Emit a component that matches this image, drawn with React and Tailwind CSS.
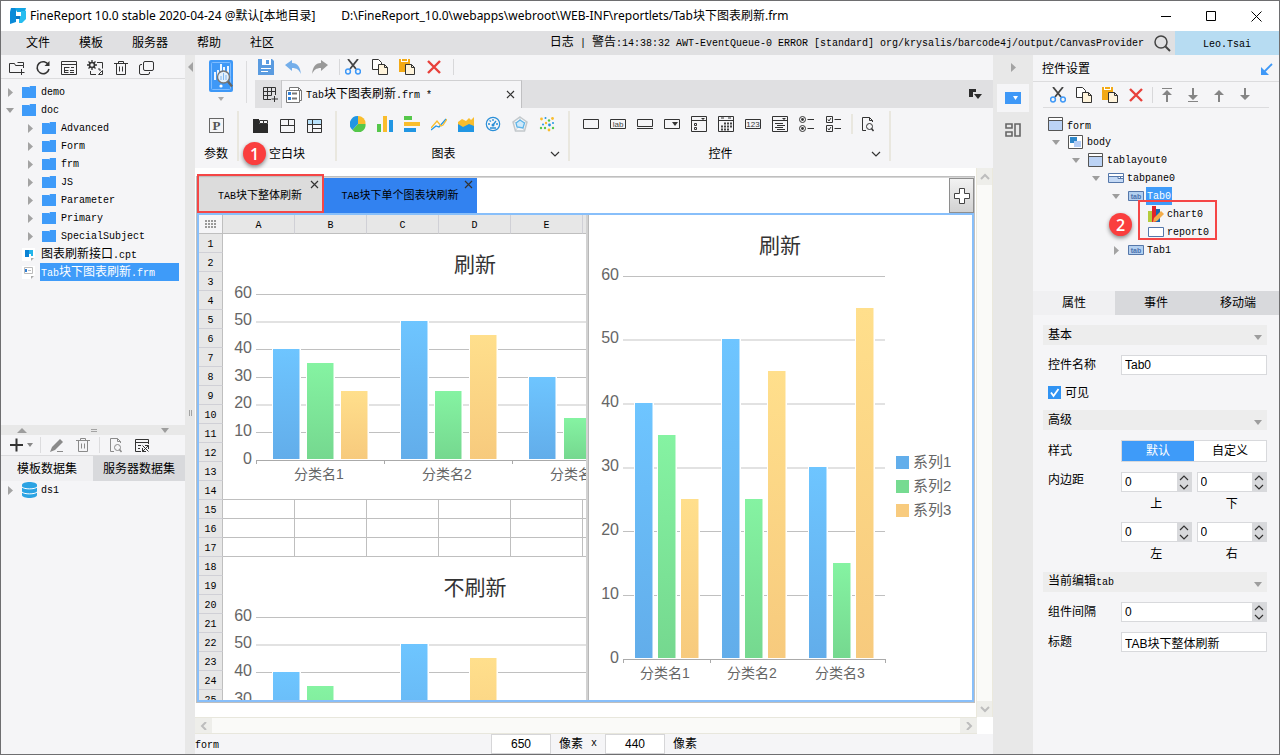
import React, { useState } from 'react';
import clsx from 'clsx';

/* ---------- text ---------- */

// Latin runs are set in 10px mono, Chinese runs in 12px
function Txt({ children, small }) {
  return (
    <span className="font-['Liberation_Mono','Noto_Sans_CJK_SC',monospace] text-[10px] whitespace-pre">
      {children.split(/([\u4e00-\u9fff]+)/).map((run, i) =>
        i % 2 ? <span key={i} className={small ? 'text-[11px]' : 'text-xs'}>{run}</span> : run
      )}
    </span>
  );
}

/* ---------- icons ---------- */

function Icon({ w = 16, h = 16, children, className }) {
  return (
    <svg
      width={w}
      height={h}
      viewBox={`0 0 ${w} ${h}`}
      fill="none"
      stroke="#333"
      className={clsx('shrink-0', className)}
      aria-hidden="true"
    >
      {children}
    </svg>
  );
}

const LogoIcon = () => (
  <Icon w={17}>
    <path d="M2 0h5v14l-6 2V4z" fill="#0a8ad8" stroke="none" />
    <path d="M6 0h11l-1 4H8z" fill="#12a5e4" stroke="none" />
    <path d="M12 3h5v8l-4 4h-3V8h2z" fill="#27bdf0" stroke="none" />
    <path d="M7 4h5v4H9v5l-2 1z" fill="#fff" stroke="none" />
    <path d="M7 8h4v3H7z" fill="#0a79c8" stroke="none" />
  </Icon>
);

const FolderPlusIcon = () => (
  <Icon>
    <path d="M10 12.500H.5V3.500h5l1 2h8V8M8.500 2.500h6v3M12.500 9v6M9.500 12.500h6" />
  </Icon>
);
const RefreshIcon = () => (
  <Icon>
    <path d="M13.500 5A6 6 0 1 0 14 9" strokeWidth="1.600" />
    <path d="M14.500 1v5H9.500z" fill="#333" stroke="none" />
  </Icon>
);
const ListWindowIcon = () => (
  <Icon>
    <path d="M.5 1.500h15v13H.5zM.5 4.500h15M3.500 7v6M3.500 7.500h5M3.500 10.500h4M3.500 12.500h4M10 7.500h3M9 10.500h4M9 12.500h4" />
  </Icon>
);
const GearWindowIcon = () => (
  <Icon>
    <circle cx="5" cy="5" r="2.500" strokeWidth="1.600" />
    <path d="M5 0v2M5 8v2M0 5h2M8 5h2M1.500 1.500l1.500 1.500M7 7l1.500 1.500M8.500 1.500L7 3M3 7L1.500 8.500" strokeWidth="1.300" />
    <path d="M10 2.500h5.500v6M3.500 11v3.500H9M15.500 10.500v4h-4zM11 9h2v2" />
  </Icon>
);
const TrashIcon = ({ color = '#333' }) => (
  <Icon>
    <path d="M1 3.500h14M5.500 3V1.500h5V3M3.500 4v10.500h9V4M6.500 6.500v5M9.500 6.500v5" stroke={color} />
  </Icon>
);
const StackIcon = () => (
  <Icon>
    <rect x="4.500" y="1.500" width="10" height="9" rx="1.500" />
    <path d="M3 4.500H2A1.500 1.500 0 0 0 .5 6v7A1.500 1.500 0 0 0 2 14.500h7a1.500 1.500 0 0 0 1.500-1.500v-1" />
  </Icon>
);
const SaveIcon = () => (
  <Icon>
    <path d="M0 0h14l2 2v14H0z" fill="#5a9be0" stroke="none" />
    <path d="M4 0h9v6H4z" fill="#fff" stroke="none" />
    <path d="M8 1h3v4H8z" fill="#5a9be0" stroke="none" />
    <path d="M3 9.500h10M3 12.500h7" stroke="#fff" />
  </Icon>
);
const UndoIcon = () => (
  <Icon>
    <path d="M0 6l7-5v3c6 0 8 4 9 11-2-4-4-6-9-6v3z" fill="#74aeea" stroke="none" />
  </Icon>
);
const RedoIcon = () => (
  <Icon>
    <path d="M16 6L9 1v3C3 4 1 8 0 15c2-4 4-6 9-6v3z" fill="#999" stroke="none" />
  </Icon>
);
const CutIcon = () => (
  <Icon>
    <path d="M3 0l8 10M13 0L5 10" stroke="#444" strokeWidth="1.800" />
    <circle cx="3" cy="12.500" r="2.400" stroke="#3e98f7" strokeWidth="1.500" />
    <circle cx="13" cy="12.500" r="2.400" stroke="#3e98f7" strokeWidth="1.500" />
  </Icon>
);
const CopyIcon = () => (
  <Icon>
    <path d="M.5.500h6l3 3v7h-9z" fill="#fff" />
    <path d="M6.500 5.500h6l3 3v7h-9z" fill="#fff4dc" />
    <path d="M12.500 5.500v3h3" />
  </Icon>
);
const PasteIcon = () => (
  <Icon>
    <path d="M0 0h11v13H0z" fill="#f3aa16" stroke="none" />
    <path d="M2 0h7v3H2z" fill="#fff" stroke="none" />
    <path d="M3 0h5v2H3z" fill="#f3aa16" stroke="none" />
    <path d="M6.500 5.500h6l3 3v7h-9z" fill="#fff4dc" />
    <path d="M12.500 5.500v3h3" />
  </Icon>
);
const DeleteIcon = () => (
  <Icon>
    <path d="M2 2l12 12M14 2L2 14" stroke="#e8403a" strokeWidth="2.400" />
  </Icon>
);
const ArrowIcon = ({ down, bar }) => (
  <Icon>
    {down ? (
      <path d="M7 1h2v7h4l-5 5-5-5h4z" fill="#858585" stroke="none" />
    ) : (
      <path d="M7 15h2V8h4L8 3 3 8h4z" fill="#858585" stroke="none" />
    )}
    {bar && <path d={down ? 'M3 14.500h10' : 'M3 1.500h10'} stroke="#858585" />}
  </Icon>
);
const PreviewIcon = () => (
  <Icon w={26} h={34}>
    <rect x="1" y="1" width="24" height="32" rx="2" fill="#3e98f7" stroke="none" />
    <rect x="3.500" y="3.500" width="19" height="27" rx="1" stroke="#7fbcff" />
    <path d="M7 21v-8M10 19v-8M13 12V5M16 12V8M20 14V7" stroke="#fff" strokeWidth="1.800" />
    <circle cx="15.500" cy="18" r="6" fill="#e4f0fb" stroke="#777" strokeWidth="1.400" />
    <path d="M13 21v-4M15.500 21v-7M18 21v-5" stroke="#7fb6ef" />
    <path d="M20 22.500l4 5" stroke="#666" strokeWidth="2.400" />
    <circle cx="13" cy="27" r="1.600" fill="#fff" stroke="none" />
  </Icon>
);
const GridPlusIcon = () => (
  <Icon>
    <path d="M9 13.500H1.500v-12h12V9M1.500 5.500h12M1.500 9.500h8M5.500 1.500v12M9.500 1.500v8M12.500 10v6M9.500 13H16" />
  </Icon>
);
const FormFileIcon = () => (
  <Icon>
    <path d="M3.500 3V.500h9l3 3v10H14" fill="#fff" stroke="#777" />
    <path d="M12.500.500v3h3" stroke="#777" />
    <path d="M.5 3.500h13v12H.5z" fill="#fff" stroke="#777" />
    <path d="M2 5h3v3H2zM2 10h3v3H2z" fill="#2f7fd6" stroke="none" />
    <path d="M6 6.500h5M6 11.500h5" stroke="#777" strokeWidth="2" />
  </Icon>
);
const CloseIcon = ({ className }) => (
  <Icon w={9} h={9} className={className}>
    <path d="M1 1l7 7M8 1L1 8" strokeWidth="1.200" />
  </Icon>
);

const ParamIcon = () => (
  <Icon w={15} h={15}>
    <rect x=".5" y=".5" width="14" height="14" stroke="#666" />
    <text x="7.500" y="12" fontSize="13" fontWeight="bold" textAnchor="middle" fill="#555" stroke="none" fontFamily="Liberation Serif">P</text>
  </Icon>
);
const TabBlockIcon = () => (
  <Icon w={15} h={15}>
    <path d="M0 1h6v5h9v9H0z" fill="#2b2b2b" stroke="none" />
    <path d="M6.500 2.500h4v3h-4zM10.500 2.500h4v3h-4z" />
  </Icon>
);
const SplitBlockIcon = () => (
  <Icon w={15} h={15}>
    <path d="M.5 1.500h14v13H.5zM.5 7.500h14M8.500 1.500v6" />
  </Icon>
);
const ReportBlockIcon = () => (
  <Icon w={15} h={15}>
    <path d="M1 2h13v4H1z" fill="#b9e2fb" stroke="none" />
    <path d="M.5 1.500h14v13H.5zM.5 6.500h14M5.500 1.500v13M5.500 10.500h9" />
  </Icon>
);

const PieIcon = () => (
  <Icon>
    <path d="M8 8V0a8 8 0 0 0-5.500 14z" fill="#2196e3" stroke="none" />
    <path d="M8 8V0a7.500 7.500 0 0 1 7.500 8z" fill="#f9bd2d" stroke="none" />
    <path d="M8 8h7.500A7.500 7.500 0 0 1 2.500 14z" fill="#55c74a" stroke="none" />
  </Icon>
);
const ColumnIcon = () => (
  <Icon>
    <path d="M0 8h4v8H0z" fill="#55c74a" stroke="none" />
    <path d="M6 0h4v16H6z" fill="#f9bd2d" stroke="none" />
    <path d="M12 4h4v12h-4z" fill="#2196e3" stroke="none" />
  </Icon>
);
const BarIcon = () => (
  <Icon>
    <path d="M0 0h8v4H0z" fill="#55c74a" stroke="none" />
    <path d="M0 6h16v4H0z" fill="#f9bd2d" stroke="none" />
    <path d="M0 12h12v4H0z" fill="#2196e3" stroke="none" />
  </Icon>
);
const LineIcon = () => (
  <Icon>
    <path d="M0 14l5-4 3 1 7-8" stroke="#2196e3" strokeWidth="1.300" />
    <path d="M0 12l6-7 4 5 2-1 4-6" stroke="#f9bd2d" strokeWidth="1.300" />
  </Icon>
);
const AreaIcon = () => (
  <Icon>
    <path d="M0 6l4-3 4 2 3-3 2 2 3-3v10H0z" fill="#f9bd2d" stroke="none" />
    <path d="M0 8l5 3 6-3 5 2v6H0z" fill="#2196e3" stroke="none" />
  </Icon>
);
const GaugeIcon = () => (
  <Icon>
    <circle cx="8" cy="8" r="6.700" stroke="#2a8fd8" strokeWidth="1.200" />
    <path d="M3 8h2M8 3v2M11 8h2M4.500 4.500l1.500 1M8 9l3-4M5 12h6" stroke="#2a8fd8" strokeWidth="1.300" />
    <circle cx="8" cy="9" r="1.500" fill="#2a8fd8" stroke="none" />
  </Icon>
);
const RadarIcon = () => (
  <Icon>
    <path d="M8 1l7 5-2.500 9h-9L1 6z" stroke="#c2c8cc" strokeWidth="1.500" />
    <path d="M8 8V1M8 8l6-2M8 8l4 6M8 8l-4 6M8 8L2 6" stroke="#c2c8cc" strokeWidth=".7" />
    <path d="M8 4l4.500 3-1.500 5-6-1-1-4z" fill="#cfe9fa" stroke="#5db4e8" strokeWidth="1.300" />
  </Icon>
);
const ScatterIcon = () => (
  <Icon>
    <g stroke="none">
      <g fill="#f9bd2d">
        <circle cx="2.500" cy="3" r="1.400" />
        <circle cx="13.500" cy="2.500" r="1.400" />
        <circle cx="7" cy="7" r="1.200" />
        <circle cx="10" cy="14" r="1.400" />
      </g>
      <g fill="#2196e3">
        <circle cx="6.500" cy="2" r="1" />
        <circle cx="10.500" cy="9" r="1.400" />
        <circle cx="14" cy="7" r="1" />
        <circle cx="4" cy="8.500" r="1" />
      </g>
      <g fill="#55c74a">
        <circle cx="2" cy="12" r="1.200" />
        <circle cx="10" cy="4.500" r="1.200" />
        <circle cx="6" cy="12" r="1.200" />
        <circle cx="14" cy="12" r="1.200" />
      </g>
    </g>
  </Icon>
);

const TextFieldIcon = () => (
  <Icon>
    <path d="M.5 3.500h15v9H.5z" />
  </Icon>
);
const LabelIcon = () => (
  <Icon>
    <path d="M.5 3.500h15v9H.5z" />
    <text x="8" y="11" fontSize="8" textAnchor="middle" fill="#444" stroke="none" fontFamily="Liberation Sans">lab</text>
  </Icon>
);
const ButtonIcon = () => (
  <Icon>
    <path d="M.5 3.500h15v7H.5zM0 12.500h16" />
  </Icon>
);
const ComboIcon = () => (
  <Icon>
    <path d="M.5 3.500h15v9H.5z" />
    <path d="M8 6h6l-3 4z" fill="#333" stroke="none" />
  </Icon>
);
const ComboCheckIcon = () => (
  <Icon>
    <path d="M.5.500h15v15H.5zM.5 4.500h15M3.500 7.500h2v2h-2zM3.500 11.500h2v2h-2z" />
    <path d="M10 2h4l-2 2z" fill="#333" stroke="none" />
  </Icon>
);
const DateIcon = () => (
  <Icon>
    <path d="M.5.500h15v15H.5zM.5 4.500h15M3 2h3M10 2h3" />
    <path d="M6 7.500h8M3 10.500h11M3 13.500h8" strokeDasharray="2 1" strokeWidth="2" stroke="#444" />
  </Icon>
);
const NumberIcon = () => (
  <Icon>
    <path d="M.5 3.500h15v9H.5z" />
    <text x="8" y="11" fontSize="8" textAnchor="middle" fill="#333" stroke="none" fontFamily="Liberation Sans">123</text>
  </Icon>
);
const TreeComboIcon = () => (
  <Icon>
    <path d="M.5.500h15v15H.5zM.5 4.500h15M3 7.500h8M5 9.500h8M3 11.500h8M5 13.500h8" />
    <path d="M10 2h4l-2 2z" fill="#333" stroke="none" />
  </Icon>
);
const RadioGroupIcon = () => (
  <Icon>
    <circle cx="3.500" cy="3.500" r="3" />
    <circle cx="3.500" cy="12.500" r="3" />
    <circle cx="3.500" cy="3.500" r="1.400" fill="#333" stroke="none" />
    <circle cx="3.500" cy="12.500" r="1.400" fill="#333" stroke="none" />
    <path d="M8.500 3.500H15M8.500 12.500H15" />
  </Icon>
);
const CheckGroupIcon = () => (
  <Icon>
    <path d="M.5.500h6v6h-6zM.5 9.500h6v6h-6zM2 3.500L3 5l2-3M2 12.500L3 14l2-3M8.500 3.500H15M8.500 12.500H15" />
  </Icon>
);
const FileSearchIcon = ({ color = '#333' }) => (
  <Icon>
    <g stroke={color}>
      <path d="M6 14.500H2.500v-13h7l3 3V6M9.500 1.500v3h3" />
      <circle cx="9.500" cy="10.500" r="3" />
      <path d="M11.500 12.500l2 2.500" strokeWidth="1.500" />
    </g>
  </Icon>
);
const EditIcon = () => (
  <Icon>
    <path d="M1 15l2-5 8-8 3 3-8 8z" fill="#8a8a8a" stroke="none" />
    <path d="M8 14.500h6" stroke="#8a8a8a" />
  </Icon>
);
const CacheIcon = () => (
  <Icon>
    <path d="M7 14.500H1.500v-12h13V7M1.500 5.500h13M4 8.500h3M4 11.500h2" />
    <path d="M8.500 8.500l6 6M14.500 8.500l-6 6M8.500 11v3.500H12M11 8.500h3.500V12" />
  </Icon>
);

const FolderIcon = () => (
  <Icon w={15} h={14}>
    <path d="M0 2h7v1l1-2h6v12H0z" fill="#3e9bf9" stroke="none" />
  </Icon>
);
const CptIcon = () => (
  <Icon w={13} h={13}>
    <path d="M0 0h13v9l-4 4H0z" fill="#fff" stroke="none" />
    <path d="M3 2h4v7H3z" fill="#0b82d4" stroke="none" />
    <path d="M7 2h4v6H9V6H7z" fill="#23b5ea" stroke="none" />
    <path d="M9 10h3l-3 3z" fill="#aaa" stroke="none" />
  </Icon>
);
const FrmIcon = () => (
  <Icon w={13} h={13}>
    <path d="M0 0h13v9l-4 4H0z" fill="#fff" stroke="none" />
    <path d="M2.500 1.500h8v6h-8zM6 4.500h3" stroke="#bbb" />
    <path d="M3 3h2v3H3z" fill="#2f7fd6" stroke="none" />
    <path d="M9 10h3l-3 3z" fill="#aaa" stroke="none" />
  </Icon>
);
const DbIcon = () => (
  <Icon w={15} h={16}>
    <path d="M0 3c0-4 15-4 15 0v10c0 4-15 4-15 0z" fill="#2ba3e3" stroke="none" />
    <path d="M0 5c2 2.500 13 2.500 15 0M0 10c2 2.500 13 2.500 15 0" stroke="#fff" />
  </Icon>
);
const FormIcon = () => (
  <Icon w={15} h={14}>
    <path d="M.5.500h14v13H.5z" fill="#bcd3f5" stroke="#555" />
    <path d="M1 1h13v2H1z" fill="#fff" stroke="none" />
    <path d="M.5 3.500h14" stroke="#555" />
  </Icon>
);
const BodyIcon = () => (
  <Icon w={15} h={14}>
    <path d="M.5.500h14v13H.5z" fill="#fff" stroke="#555" />
    <path d="M2 2h7v6H2z" fill="#2d86c9" stroke="none" />
    <path d="M6 6h7v6H6z" fill="#b4cdf5" stroke="none" />
  </Icon>
);
const TabPaneIcon = () => (
  <Icon h={11}>
    <path d="M.5.500h15v9H.5z" fill="#fff" stroke="#5577aa" />
    <path d="M1 4h9v2h5v3H1z" fill="#c4d9f5" stroke="none" />
    <path d="M1 3.500h9v2h5M10 3.500h5M12.500 3.500v2" stroke="#5577aa" />
  </Icon>
);
const TabIcon = () => (
  <Icon h={10}>
    <path d="M.5.500h15v9H.5z" fill="#b3d0f0" stroke="#5577aa" />
    <text x="8" y="8" fontSize="7" fontWeight="bold" textAnchor="middle" fill="#4a70ad" stroke="none" fontFamily="Liberation Sans">tab</text>
  </Icon>
);
const ChartIcon = () => (
  <Icon>
    <path d="M0 5h4v11H0z" fill="#b5cc3c" stroke="none" />
    <path d="M4 0h4v16H4z" fill="#e0262b" stroke="none" />
    <path d="M8 3h4v13H8z" fill="#1667b3" stroke="none" />
    <path d="M5 16l1-4 7-7 3 3-7 7z" fill="#f3ad4a" stroke="none" />
  </Icon>
);
const ReportIcon = () => (
  <Icon h={10}>
    <path d="M.5.500h15v9H.5z" fill="#fff" stroke="#5577aa" />
  </Icon>
);

const TriDown = ({ className }) => (
  <Icon w={8} h={5} className={className}>
    <path d="M0 0h8L4 5z" fill="#9d9d9d" stroke="none" />
  </Icon>
);
const TriUp = () => (
  <Icon w={10} h={5}>
    <path d="M0 5h10L5 0z" fill="#9d9d9d" stroke="none" />
  </Icon>
);
const TriRight = () => (
  <Icon w={5} h={9}>
    <path d="M0 0v9l5-4.500z" fill="#a3a3a3" stroke="none" />
  </Icon>
);
const TriLeft = () => (
  <Icon w={5} h={10}>
    <path d="M5 0v10L0 5z" fill="#a3a3a3" stroke="none" />
  </Icon>
);
const CHEVRONS = {
  up: 'M1 6l4-4 4 4',
  down: 'M1 2l4 4 4-4',
  left: 'M7 0L3 4l4 4',
  right: 'M3 0l4 4-4 4',
};
const Chevron = ({ dir, color = '#333', bold }) => (
  <Icon w={10} h={8}>
    <path d={CHEVRONS[dir]} stroke={color} strokeWidth={bold ? 2 : 1.2} />
  </Icon>
);

/* ---------- data ---------- */

const MENUS = ['文件', '模板', '服务器', '帮助', '社区'];

const FILE_TREE = [
  { label: 'demo', icon: FolderIcon, children: [] },
  {
    label: 'doc',
    icon: FolderIcon,
    open: true,
    children: ['Advanced', 'Form', 'frm', 'JS', 'Parameter', 'Primary', 'SpecialSubject'].map((label) => ({
      label,
      icon: FolderIcon,
      children: [],
    })),
  },
  { label: '图表刷新接口.cpt', icon: CptIcon },
  { label: 'Tab块下图表刷新.frm', icon: FrmIcon, selected: true, fill: true },
];

const WIDGET_TREE = [
  {
    label: 'body',
    icon: BodyIcon,
    open: true,
    children: [
      {
        label: 'tablayout0',
        icon: FormIcon,
        open: true,
        children: [
          {
            label: 'tabpane0',
            icon: TabPaneIcon,
            open: true,
            children: [
              {
                label: 'Tab0',
                icon: TabIcon,
                open: true,
                selected: true,
                children: [
                  { label: 'chart0', icon: ChartIcon },
                  { label: 'report0', icon: ReportIcon },
                ],
              },
              { label: 'Tab1', icon: TabIcon, children: [] },
            ],
          },
        ],
      },
    ],
  },
];

const CHART_TOOLS = [
  ['饼图', PieIcon], ['柱形图', ColumnIcon], ['条形图', BarIcon], ['折线图', LineIcon],
  ['面积图', AreaIcon], ['仪表盘', GaugeIcon], ['雷达图', RadarIcon], ['散点图', ScatterIcon],
];
const WIDGET_TOOLS = [
  ['文本', TextFieldIcon], ['标签', LabelIcon], ['按钮', ButtonIcon], ['下拉框', ComboIcon],
  ['下拉复选框', ComboCheckIcon], ['日期', DateIcon], ['数字', NumberIcon], ['下拉树', TreeComboIcon],
  ['单选按钮组', RadioGroupIcon], ['复选框组', CheckGroupIcon],
];
const BLOCK_TOOLS = [['Tab块', TabBlockIcon], ['绝对画布块', SplitBlockIcon], ['报表块', ReportBlockIcon]];
const EDIT_TOOLS = [['剪切', CutIcon], ['复制', CopyIcon], ['粘贴', PasteIcon], ['删除', DeleteIcon]];

const VALUES = [
  [40, 35, 25],
  [50, 25, 45],
  [30, 15, 55],
];
const FILLS = ['url(#blue)', 'url(#green)', 'url(#yellow)'];
const LEGEND = ['#62aeeb', '#76db91', '#f8cb7e'];

const SMALL_CHART = {
  width: 363, height: 265, left: 33, right: 363, base: 226, step: 2.77, barWidth: 27, titleX: 252,
  bars: [[50, 84, 118], [178, 212, 247], [306, 341, 375]],
  centers: [96, 224, 352], ticks: [33, 161, 289],
  lines: { 60: 60, 50: 87, 40: 115, 30: 143, 20: 170, 10: 198 },
  soft: [50, 20],
};
const BIG_CHART = {
  width: 383, height: 485, left: 34, right: 296, base: 444, step: 6.39, barWidth: 18, titleX: 191,
  bars: [[46, 69, 92], [133, 156, 179], [220, 244, 267]],
  centers: [76, 163, 251], ticks: [34, 121, 296],
  lines: { 60: 61, 50: 124, 40: 188, 30: 252, 20: 316, 10: 380 },
  soft: [50, 40, 30],
  legend: true,
};

/* ---------- shared pieces ---------- */

function IconButton({ label, children, className }) {
  return (
    <button type="button" aria-label={label} className={clsx('flex items-center justify-center', className)}>
      {children}
    </button>
  );
}

function Tree({ nodes, className }) {
  return (
    <ul className={className}>
      {nodes.map((node) => (
        <TreeNode key={node.label} node={node} />
      ))}
    </ul>
  );
}

function TreeNode({ node }) {
  const [open, setOpen] = useState(!!node.open);
  const NodeIcon = node.icon;
  return (
    <li>
      <div className="flex h-[18px] items-center">
        <span className="flex w-5 shrink-0 items-center">
          {node.children && (
            <button type="button" aria-label={node.label} onClick={() => setOpen(!open)} className="flex w-4 justify-center">
              {open ? <TriDown /> : <TriRight />}
            </button>
          )}
        </span>
        <span className="flex w-[18px] shrink-0 items-center">
          <NodeIcon />
        </span>
        <span
          className={clsx(
            'flex h-[18px] items-center px-px pt-0.5',
            node.selected && 'bg-[#3e9bf9] text-white',
            node.fill && 'flex-1'
          )}
        >
          <Txt>{node.label}</Txt>
        </span>
      </div>
      {open && node.children.length > 0 && <Tree nodes={node.children} className="pl-5" />}
    </li>
  );
}

function BarChart({ title, chart }) {
  const { width, height, left, right, base, step, barWidth, lines, soft } = chart;
  return (
    <svg
      width={width}
      height={height}
      className="block overflow-hidden font-['Liberation_Sans','Noto_Sans_CJK_SC',sans-serif]"
      role="img"
      aria-label={title}
    >
      <text x={chart.titleX} y="38" textAnchor="middle" fontSize="21" fill="#333">{title}</text>
      {Object.entries(lines).map(([value, y]) => (
        <g key={value}>
          <rect
            x={left}
            y={y}
            width={right - left}
            height={soft.includes(Number(value)) ? 2 : 1}
            fill={soft.includes(Number(value)) ? '#e2e2e2' : '#c0c0c0'}
          />
          <text x={left - 4} y={y + 4} textAnchor="end" fontSize="16" fill="#666">{value}</text>
        </g>
      ))}
      <text x={left - 4} y={base + 4} textAnchor="end" fontSize="16" fill="#666">0</text>
      {chart.bars.map((group, g) =>
        group.map((x, s) => {
          const h = Math.round(VALUES[g][s] * step);
          return (
            <g key={`${g}-${s}`}>
              <rect x={x - 1} y={base - h - 1} width={barWidth + 2} height={h + 1} fill="#fff" />
              <rect x={x} y={base - h} width={barWidth} height={h - 1} fill={FILLS[s]} />
              <rect x={x + barWidth - 1} y={base - h} width="1" height={h - 1} fill="#fff" opacity=".5" />
            </g>
          );
        })
      )}
      <rect x={left} y={base} width={right - left} height="1" fill="#aaa" />
      {chart.ticks.map((x) => (
        <rect key={x} x={x} y={base} width="1" height="4" fill="#aaa" />
      ))}
      {chart.centers.map((x, i) => (
        <text key={x} x={x} y={base + 19} textAnchor="middle" fontSize="14" fill="#666">分类名{i + 1}</text>
      ))}
      {chart.legend &&
        LEGEND.map((color, i) => (
          <g key={color}>
            <rect x="307" y={241 + i * 24} width="13" height="13" fill={color} />
            <text x="324" y={252 + i * 24} fontSize="15" fill="#666">系列{i + 1}</text>
          </g>
        ))}
    </svg>
  );
}

/* ---------- left side ---------- */

function LeftPanel() {
  return (
    <aside className="flex w-[184px] shrink-0 flex-col bg-[#f5f5f7]">
      <div className="flex h-6 items-center gap-[10px] border-b border-[#dcdcde] pt-0.5 pl-2">
        <IconButton label="新建文件夹"><FolderPlusIcon /></IconButton>
        <IconButton label="刷新"><RefreshIcon /></IconButton>
        <IconButton label="重命名"><ListWindowIcon /></IconButton>
        <IconButton label="设置"><GearWindowIcon /></IconButton>
        <IconButton label="删除"><TrashIcon /></IconButton>
        <IconButton label="切换"><StackIcon /></IconButton>
      </div>
      <div className="min-h-0 flex-1 overflow-hidden pt-1 pr-1.5 pl-px">
        <Tree nodes={FILE_TREE} />
      </div>
      <div className="flex h-[329px] shrink-0 flex-col">
        <div className="flex h-[10px] items-center justify-between bg-[#e8e8e8] px-4">
          <TriUp />
          <span className="h-[3px] w-1.5 border-y border-[#a3a3a3]" />
          <TriDown />
        </div>
        <div className="flex h-[21px] items-center border-b border-[#dcdcde] pl-2">
          <IconButton label="添加数据集" className="w-6 gap-0.5">
            <Icon>
              <path d="M1 8h13M7.500 1.500v13" strokeWidth="2" />
            </Icon>
            <Icon w={6} h={4}>
              <path d="M0 0h6L3 4z" fill="#888" stroke="none" />
            </Icon>
          </IconButton>
          <span className="mr-2 ml-[7px] h-4 w-px bg-[#dcdcde]" />
          <IconButton label="编辑" className="mr-[10px]"><EditIcon /></IconButton>
          <IconButton label="删除数据集"><TrashIcon color="#8a8a8a" /></IconButton>
          <span className="mx-2 h-4 w-px bg-[#dcdcde]" />
          <IconButton label="预览" className="mr-[10px]"><FileSearchIcon color="#8a8a8a" /></IconButton>
          <IconButton label="缓存"><CacheIcon /></IconButton>
        </div>
        <div className="flex h-[25px]" role="tablist">
          <button type="button" role="tab" aria-selected="true" className="flex-1 bg-[#f0f0f2]">模板数据集</button>
          <button type="button" role="tab" aria-selected="false" className="flex-1 bg-[#d8d9dc]">服务器数据集</button>
        </div>
        <div className="pl-px">
          <Tree nodes={[{ label: 'ds1', icon: DbIcon, children: [] }]} />
        </div>
      </div>
    </aside>
  );
}

/* ---------- centre ---------- */

const Sep = () => <span className="h-4 w-px bg-[#d8d8da]" />;

function EditorHeader() {
  return (
    <div className="flex h-[53px] shrink-0 bg-[#f5f5f7]">
      <div className="flex w-[60px] shrink-0 items-start pt-1">
        <button type="button" aria-label="预览" className="flex w-[51px] flex-col items-center gap-1">
          <PreviewIcon />
          <Icon w={6} h={4}>
            <path d="M0 0h6L3 4z" fill="#aaa" stroke="none" />
          </Icon>
        </button>
        <span className="mt-0.5 h-[42px] w-px bg-[#dcdcde]" />
      </div>
      <div className="flex min-w-0 flex-1 flex-col">
        <div className="flex h-[25px] items-center gap-[11px] pb-0.5 pl-[3px]">
          <IconButton label="保存"><SaveIcon /></IconButton>
          <IconButton label="撤销"><UndoIcon /></IconButton>
          <IconButton label="重做"><RedoIcon /></IconButton>
          <Sep />
          <div className="-ml-1.5 flex gap-[11px]">
            {EDIT_TOOLS.map(([label, ToolIcon]) => (
              <IconButton key={label} label={label}><ToolIcon /></IconButton>
            ))}
          </div>
          <Sep />
        </div>
        <div className="flex h-7 items-center bg-[#e0e0e2]">
          <IconButton label="新建" className="h-7 w-[27px] border-r border-[#c6c6c8] pl-1"><GridPlusIcon /></IconButton>
          <div className="flex h-7 w-[240px] items-center border-t border-r border-[#d0d0d2] border-r-[#c0c0c2] bg-[#f5f5f7] pr-1.5 pl-1">
            <FormFileIcon />
            <span className="flex-1 pl-1"><Txt>Tab块下图表刷新.frm *</Txt></span>
            <IconButton label="关闭"><CloseIcon /></IconButton>
          </div>
          <IconButton label="更多模板" className="mr-[11px] ml-auto">
            <Icon w={13} h={11}>
              <path d="M0 0h7v3H4v5H0z" fill="#2b2b2b" stroke="none" />
              <path d="M5 5h8l-4 5z" fill="#2b2b2b" stroke="none" />
            </Icon>
          </IconButton>
        </div>
      </div>
    </div>
  );
}

function PaletteGroup({ label, tools, className, toolsClass, expand, children }) {
  return (
    <div className={clsx('flex h-[50px] flex-col justify-between border-r-2 border-[#e9e7df]', className)}>
      <div className={clsx('flex h-[26px] items-center', toolsClass)}>
        {tools.map(([name, ToolIcon]) => (
          <IconButton key={name} label={name}><ToolIcon /></IconButton>
        ))}
        {children}
      </div>
      <div className="flex h-4 items-center pt-0.5">
        <span className="flex-1 text-center">{label}</span>
        {expand && (
          <IconButton label={`展开${label}`} className="mr-2"><Chevron dir="down" /></IconButton>
        )}
      </div>
    </div>
  );
}

function Palette() {
  return (
    <div className="relative flex h-[60px] shrink-0 items-start bg-[#f5f5f7] pt-[3px]">
      <PaletteGroup label="参数" tools={[['参数', ParamIcon]]} className="w-11" toolsClass="justify-center pt-0.5" />
      <PaletteGroup label="空白块" tools={BLOCK_TOOLS} className="w-[98px]" toolsClass="justify-center gap-3 pt-0.5" />
      <PaletteGroup label="图表" tools={CHART_TOOLS} className="w-[233px]" toolsClass="gap-[11px] pl-[13px]" expand />
      <PaletteGroup label="控件" tools={WIDGET_TOOLS} className="w-[321px]" toolsClass="gap-[11px] pl-[13px]" expand>
        <span className="-ml-0.5 h-5 w-0.5 bg-[#e9e7df]" />
        <IconButton label="预定义控件" className="-ml-1"><FileSearchIcon /></IconButton>
      </PaletteGroup>
      <Badge className="top-[34px] left-12">1</Badge>
    </div>
  );
}

function Badge({ children, className }) {
  return (
    <span
      className={clsx(
        "absolute z-10 flex h-[23px] w-[23px] items-center justify-center rounded-full bg-[#fa3e3e] font-['Open_Sans',sans-serif] text-base font-semibold text-white shadow-[0_2px_4px_rgba(0,0,0,0.45)]",
        className
      )}
    >
      {children}
    </span>
  );
}

// the last column only shows its edge, so it carries no letter
const COLUMNS = ['A', 'B', 'C', 'D', 'E', ''];
const HEAD_CELL = 'border-[#bfbfbf] bg-[#e7e7e7] p-0 font-normal leading-none';

function ReportGrid() {
  return (
    <div className="w-[387px] shrink-0 overflow-hidden bg-white">
      <table className="w-[456px] table-fixed border-separate border-spacing-0">
        <colgroup>
          <col className="w-6" />
          {COLUMNS.map((c) => <col key={c} className="w-[72px]" />)}
        </colgroup>
        <thead>
          <tr className="h-[19px]">
            <th className="border-r border-b border-[#bfbfbf] bg-[#f5f5f7] p-0" aria-label="全选">
              <Icon w={11} h={8} className="mx-auto">
                <path d="M0 1h11M0 4h11M0 7h11" stroke="#999" strokeWidth="2" strokeDasharray="2 1" />
              </Icon>
            </th>
            {COLUMNS.map((c) => (
              <th key={c} scope="col" className={clsx(HEAD_CELL, 'border-r border-b border-r-[#d0d0d6]')}>
                <Txt>{c}</Txt>
              </th>
            ))}
          </tr>
        </thead>
        <tbody>
          {Array.from({ length: 25 }, (_, i) => i + 1).map((row) => (
            <tr key={row} className="h-[19px]">
              <th scope="row" className={clsx(HEAD_CELL, 'border-r border-b border-b-[#d0d0d6]')}>
                <Txt>{String(row)}</Txt>
              </th>
              {row === 1 && (
                <td colSpan={6} rowSpan={14} className="border-b border-[#bfbfbf] p-0 align-top">
                  <BarChart title="刷新" chart={SMALL_CHART} />
                </td>
              )}
              {row >= 15 && row <= 17 && COLUMNS.map((c) => (
                <td key={c} className="border-r border-b border-[#bfbfbf] p-0" />
              ))}
              {row === 18 && (
                <td colSpan={6} rowSpan={8} className="p-0 align-top">
                  <div className="h-[152px] overflow-hidden">
                    <BarChart title="不刷新" chart={SMALL_CHART} />
                  </div>
                </td>
              )}
            </tr>
          ))}
        </tbody>
      </table>
    </div>
  );
}

function Canvas() {
  return (
    <div className="flex min-h-0 flex-1 bg-white">
      <div className="flex min-w-0 flex-1 flex-col pt-2 pr-px pb-[14px] pl-px">
        <div className="flex min-h-0 flex-1 flex-col border border-[#bfbfbf]">
          <div className="relative flex h-9 shrink-0 border-t border-[#d6d6d6]">
            <button type="button" className="relative w-[126px] bg-[#dcdcdc]">
              <Txt small>TAB块下整体刷新</Txt>
              <CloseIcon className="absolute top-0.5 right-1" />
            </button>
            <button type="button" className="relative w-[154px] bg-[#3282f0]">
              <Txt small>TAB块下单个图表块刷新</Txt>
              <CloseIcon className="absolute top-0.5 right-1" />
            </button>
            <IconButton label="添加Tab" className="ml-auto w-[25px] border border-[#8e8e8e] bg-linear-to-b from-[#f2f2f2] to-[#d2d2d2]">
              <Icon>
                <path d="M5.500.500h5v5h5v5h-5v5h-5v-5h-5v-5h5z" fill="#fff" stroke="#444" strokeLinejoin="round" />
              </Icon>
            </IconButton>
            <span className="absolute -top-[4px] left-0 h-[39px] w-[127px] border-2 border-[#f54646]" />
          </div>
          <div className="flex min-h-0 flex-1 border-2 border-[#88bffa]">
            <ReportGrid />
            <div className="w-[3px] shrink-0 border-r border-[#b8b8b8] bg-[#d2d2d2]" />
            <div className="min-w-0 flex-1 overflow-hidden">
              <BarChart title="刷新" chart={BIG_CHART} />
            </div>
          </div>
        </div>
      </div>
      <div className="flex w-[17px] shrink-0 flex-col border-x border-[#ebe9dd] bg-[#fafaf8]">
        <IconButton label="向上滚动" className="h-[17px] bg-[#eeeeea]"><Chevron dir="up" color="#bdbdbd" bold /></IconButton>
        <IconButton label="向下滚动" className="mt-auto h-4 bg-[#eeeeea]"><Chevron dir="down" color="#bdbdbd" bold /></IconButton>
      </div>
    </div>
  );
}

function Editor() {
  return (
    <main className="flex min-w-0 flex-1 flex-col">
      <EditorHeader />
      <Palette />
      <Canvas />
      <div className="flex h-[17px] shrink-0 bg-white">
        <div className="flex flex-1 justify-between border-y border-[#e8e7dd] bg-[#fafaf8]">
          <IconButton label="向左滚动" className="w-[17px] bg-[#eeeeea]"><Chevron dir="left" color="#bdbdbd" bold /></IconButton>
          <IconButton label="向右滚动" className="w-[17px] bg-[#eeeeea]"><Chevron dir="right" color="#bdbdbd" bold /></IconButton>
        </div>
        <span className="w-4" />
      </div>
      <div className="flex h-5 shrink-0 items-center bg-[#f5f5f7]">
        <span className="w-[296px]"><Txt>form</Txt></span>
        <input aria-label="宽度" defaultValue="650" className="h-5 w-[60px] border border-[#d6d6d8] bg-white text-center text-xs" />
        <span className="flex items-center gap-2 px-2">像素 <Txt>x</Txt></span>
        <input aria-label="高度" defaultValue="440" className="h-5 w-[60px] border border-[#d6d6d8] bg-white text-center text-xs" />
        <span className="px-2">像素</span>
      </div>
    </main>
  );
}

/* ---------- right side ---------- */

function Spinner({ id }) {
  const [value, setValue] = useState(0);
  return (
    <div className="flex h-5 min-w-0 flex-1 border border-[#d8d9dc] bg-white">
      <input
        id={id}
        value={value}
        onChange={(e) => setValue(Number(e.target.value) || 0)}
        className="w-0 min-w-0 flex-1 px-[3px] text-xs leading-none"
      />
      <div className="flex w-[14px] flex-col bg-[#d8d9dc]">
        <button type="button" aria-label="增加" onClick={() => setValue(value + 1)} className="flex flex-1 items-center justify-center">
          <Chevron dir="up" />
        </button>
        <button type="button" aria-label="减少" onClick={() => setValue(value - 1)} className="flex flex-1 items-center justify-center">
          <Chevron dir="down" />
        </button>
      </div>
    </div>
  );
}

function SectionTitle({ children }) {
  return (
    <button type="button" className="flex h-5 items-center justify-between bg-[#ededed] px-[5px] text-left">
      {children}
      <TriDown className="mt-1" />
    </button>
  );
}

function Properties() {
  const [style, setStyle] = useState('默认');
  return (
    <form className="flex flex-col gap-2.5 py-2.5 pr-3 pl-2.5">
      <SectionTitle>基本</SectionTitle>
      <div className="flex items-center">
        <label htmlFor="widget-name" className="w-[78px] pl-[5px]">控件名称</label>
        <input id="widget-name" defaultValue="Tab0" className="h-5 min-w-0 flex-1 border border-[#d8d9dc] bg-white px-[3px] text-xs" />
      </div>
      <label className="flex h-[15px] items-center gap-1 pl-[5px]">
        <span className="relative flex h-[13px] w-[13px]">
          <input type="checkbox" defaultChecked className="peer h-[13px] w-[13px] appearance-none border border-[#3093f3] bg-white checked:bg-[#3093f3]" />
          <Icon w={13} h={13} className="pointer-events-none absolute inset-0 hidden peer-checked:block">
            <path d="M3 6.500L5.500 10l5-7" stroke="#fff" strokeWidth="1.800" />
          </Icon>
        </span>
        可见
      </label>
      <SectionTitle>高级</SectionTitle>
      <div className="flex h-[22px] items-center">
        <span className="w-[78px] pl-[5px]">样式</span>
        <div className="flex h-[22px] flex-1 border border-[#d8d9dc]">
          {['默认', '自定义'].map((name) => (
            <button
              key={name}
              type="button"
              onClick={() => setStyle(name)}
              className={clsx('flex-1', style === name ? 'bg-[#3e9bf9] text-white' : 'bg-white')}
            >
              {name}
            </button>
          ))}
        </div>
      </div>
      <div className="flex">
        <span className="w-[78px] shrink-0 pl-[5px] leading-4">内边距</span>
        <div className="grid flex-1 grid-cols-2 gap-x-[5px] gap-y-2.5">
          {['上', '下', '左', '右'].map((side) => (
            <div key={side} className="flex h-10 flex-col">
              <div className="flex"><Spinner id={`pad-${side}`} /></div>
              <label htmlFor={`pad-${side}`} className="pt-1 text-center leading-4">{side}</label>
            </div>
          ))}
        </div>
      </div>
      <SectionTitle><Txt>当前编辑tab</Txt></SectionTitle>
      <div className="flex items-center">
        <label htmlFor="gap" className="w-[78px] pl-[5px]">组件间隔</label>
        <Spinner id="gap" />
      </div>
      <div className="flex items-center">
        <label htmlFor="tab-title" className="w-[78px] pl-[5px]">标题</label>
        <input id="tab-title" defaultValue="TAB块下整体刷新" className="h-5 min-w-0 flex-1 border border-[#d8d9dc] bg-white px-[3px] text-xs" />
      </div>
    </form>
  );
}

function RightPanel() {
  return (
    <aside className="flex w-[246px] shrink-0 flex-col bg-[#f5f5f7]">
      <div className="flex h-[27px] items-center justify-between border-b border-[#dcdcde] pt-0.5 pr-1.5 pl-[9px]">
        <h2>控件设置</h2>
        <IconButton label="收起">
          <Icon w={12} h={12}>
            <path d="M11 1L3 9" stroke="#3e98f7" strokeWidth="1.800" />
            <path d="M0 4v8h8z" fill="#3e98f7" stroke="none" />
          </Icon>
        </IconButton>
      </div>
      <div className="mx-2.5 flex h-[26px] items-center gap-2.5 border-b border-[#dcdcde] pl-[7px]">
        {EDIT_TOOLS.map(([label, ToolIcon]) => (
          <IconButton key={label} label={label}><ToolIcon /></IconButton>
        ))}
        <div className="-ml-0.5 flex items-center gap-2.5">
          <Sep />
          <IconButton label="置于顶层" className="-ml-1"><ArrowIcon bar /></IconButton>
          <IconButton label="置于底层"><ArrowIcon down bar /></IconButton>
          <IconButton label="上移一层"><ArrowIcon /></IconButton>
          <IconButton label="下移一层"><ArrowIcon down /></IconButton>
        </div>
      </div>
      <div className="relative h-[183px] pt-[7px] pl-[15px]">
        <div className="flex h-[18px] items-center">
          <span className="w-[19px]"><FormIcon /></span>
          <span className="pt-0.5"><Txt>form</Txt></span>
        </div>
        <Tree nodes={WIDGET_TREE} />
        <span className="absolute top-[92px] left-[105px] h-10 w-[79px] border-2 border-[#f54646]" />
        <Badge className="top-[105px] left-[76px]">2</Badge>
      </div>
      <div className="flex h-6 shrink-0 bg-[#d8d9dc]" role="tablist">
        <button type="button" role="tab" aria-selected="true" className="flex-1 bg-[#f0f0f2]">属性</button>
        <button type="button" role="tab" aria-selected="false" className="flex-1">事件</button>
        <button type="button" role="tab" aria-selected="false" className="flex-1">移动端</button>
      </div>
      <Properties />
    </aside>
  );
}

export default function App() {
  return (
    <div className="flex h-screen flex-col overflow-hidden border border-[#6e6e70] bg-white font-['Liberation_Sans','Noto_Sans_CJK_SC',sans-serif] text-xs leading-none text-black">
      <svg width="0" height="0" className="absolute" aria-hidden="true">
        <defs>
          <linearGradient id="blue" x2="0" y2="1">
            <stop stopColor="#6ec5ff" />
            <stop offset="1" stopColor="#62adea" />
          </linearGradient>
          <linearGradient id="green" x2="0" y2="1">
            <stop stopColor="#85f3a2" />
            <stop offset="1" stopColor="#75d88f" />
          </linearGradient>
          <linearGradient id="yellow" x2="0" y2="1">
            <stop stopColor="#ffdf8c" />
            <stop offset="1" stopColor="#f7ca7d" />
          </linearGradient>
        </defs>
      </svg>

      {/* Title bar */}
      <header className="flex h-[30px] shrink-0 items-center pl-2 font-['Noto_Sans','Noto_Sans_CJK_SC',sans-serif] text-xs">
        <LogoIcon />
        <h1 className="flex flex-1 gap-[26px] pl-1 whitespace-pre">
          <span>FineReport 10.0 stable 2020-04-24 @默认[本地目录]</span>
          <span>D:\FineReport_10.0\webapps\webroot\WEB-INF\reportlets/Tab块下图表刷新.frm</span>
        </h1>
        <IconButton label="最小化" className="w-[45px]">
          <Icon w={10} h={10}><path d="M0 5.500h10" stroke="#000" /></Icon>
        </IconButton>
        <IconButton label="最大化" className="w-[45px]">
          <Icon w={10} h={10}><path d="M.5.500h9v9h-9z" stroke="#000" /></Icon>
        </IconButton>
        <IconButton label="关闭窗口" className="w-[46px]">
          <Icon w={11} h={11}><path d="M.5.500l10 10M10.500.500l-10 10" stroke="#000" /></Icon>
        </IconButton>
      </header>

      {/* Menu bar */}
      <nav className="flex h-6 shrink-0 items-center bg-[#e0e0e2]">
        <div className="flex flex-1 gap-[29px] pl-[25px]">
          {MENUS.map((menu) => (
            <button key={menu} type="button">{menu}</button>
          ))}
        </div>
        <Txt>{'日志 | 警告:14:38:32 AWT-EventQueue-0 ERROR [standard] org/krysalis/barcode4j/output/CanvasProvider'}</Txt>
        <IconButton label="搜索" className="w-[31px] pl-1.5">
          <Icon w={17} h={17}>
            <circle cx="7" cy="7" r="6" stroke="#444" strokeWidth="1.500" />
            <path d="M11.500 11.500l4.500 4.500" stroke="#444" strokeWidth="2" />
          </Icon>
        </IconButton>
        <button type="button" className="h-6 w-[104px] bg-[#b7dcf2]"><Txt>Leo.Tsai</Txt></button>
      </nav>

      <div className="flex min-h-0 flex-1">
        <LeftPanel />
        <div className="flex w-[10px] shrink-0 flex-col items-center bg-[#e8e8e8] pt-[7px]">
          <TriLeft />
          <span className="my-auto h-1.5 w-[3px] border-x border-[#a3a3a3]" />
        </div>
        <Editor />
        <div className="flex w-10 shrink-0 flex-col items-center bg-[#e8e8e8]">
          <IconButton label="折叠面板" className="h-[29px] w-8 pb-1"><TriRight /></IconButton>
          <IconButton label="控件设置" className="h-7 w-8 bg-[#f5f5f7]">
            <Icon h={12}>
              <path d="M0 0h16v12H0z" fill="#3e98f7" stroke="none" />
              <path d="M8 4h5l-2.500 4z" fill="#fff" stroke="none" />
            </Icon>
          </IconButton>
          <IconButton label="组件库" className="h-9 w-8">
            <Icon h={14}>
              <path d="M1 1h6v4H1zM1 9h6v4H1zM10 1h5v12h-5z" stroke="#666" strokeWidth="1.600" />
            </Icon>
          </IconButton>
        </div>
        <RightPanel />
      </div>
    </div>
  );
}
